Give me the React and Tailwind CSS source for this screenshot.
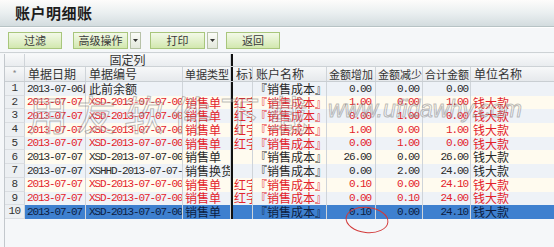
import React from "react";

const CJK = "font-['Noto_Sans_CJK_SC','Noto_Sans',sans-serif]";
const MONO = "font-['Liberation_Mono',monospace] text-[11px] tracking-[-1.1px]";

const rows = [
  { n: 1, c: "k", date: "2013-07-06以前", doc: "此前余额", docCjk: true, type: "", flag: "", inc: "0.00", dec: "0.00", tot: "0.00", unit: "" },
  { n: 2, c: "r", date: "2013-07-07", doc: "XSD-2013-07-07-0001", type: "销售单", flag: "红字", inc: "1.00", dec: "0.00", tot: "1.00", unit: "钱大款" },
  { n: 3, c: "r", date: "2013-07-07", doc: "XSD-2013-07-07-0002", type: "销售单", flag: "红字", inc: "0.00", dec: "1.00", tot: "0.00", unit: "钱大款" },
  { n: 4, c: "r", date: "2013-07-07", doc: "XSD-2013-07-07-0003", type: "销售单", flag: "红字", inc: "1.00", dec: "0.00", tot: "1.00", unit: "钱大款" },
  { n: 5, c: "r", date: "2013-07-07", doc: "XSD-2013-07-07-0004", type: "销售单", flag: "红字", inc: "0.00", dec: "1.00", tot: "0.00", unit: "钱大款" },
  { n: 6, c: "k", date: "2013-07-07", doc: "XSD-2013-07-07-0005", type: "销售单", flag: "", inc: "26.00", dec: "0.00", tot: "26.00", unit: "钱大款" },
  { n: 7, c: "k", date: "2013-07-07", doc: "XSHHD-2013-07-07-0001", type: "销售换货单", flag: "", inc: "0.00", dec: "2.00", tot: "24.00", unit: "钱大款" },
  { n: 8, c: "r", date: "2013-07-07", doc: "XSD-2013-07-07-0006", type: "销售单", flag: "红字", inc: "0.10", dec: "0.00", tot: "24.10", unit: "钱大款" },
  { n: 9, c: "r", date: "2013-07-07", doc: "XSD-2013-07-07-0007", type: "销售单", flag: "红字", inc: "0.00", dec: "0.10", tot: "24.00", unit: "钱大款" },
  { n: 10, c: "s", date: "2013-07-07", doc: "XSD-2013-07-07-0008", type: "销售单", flag: "", inc: "0.10", dec: "0.00", tot: "24.10", unit: "钱大款" },
];

const cell = "shrink-0 overflow-hidden whitespace-nowrap border-r border-[#cfd4d9] h-full flex items-center";

function Btn({ label, drop }) {
  return (
    <div className="flex h-[17px] gap-[2px]">
      <div className={`h-full flex items-center justify-center border border-[#a8c67c] bg-gradient-to-b from-[#f3f9e8] to-[#d2e8af] text-[11px] text-[#3a3a3a] ${CJK} ${drop ? "w-[55px]" : "w-[54px]"}`}>
        {label}
      </div>
      {drop && (
        <div className="h-full w-[11px] flex items-center justify-center border border-[#b7c2a8] bg-gradient-to-b from-[#fbfcf8] to-[#e3e8dc]">
          <svg width="5" height="3" viewBox="0 0 5 3"><path d="M0 0h5L2.5 3z" fill="#333" /></svg>
        </div>
      )}
    </div>
  );
}

function Row({ r }) {
  const sel = r.c === "s";
  const color = r.c === "r" ? "text-[#e3232b]" : sel ? "text-[#0d1d3f]" : "text-[#2a2a2a]";
  const bg = sel ? "bg-[#3e80cf]" : r.n % 2 === 0 ? "bg-[#fffbef]" : "bg-[#eef2f7]";
  return (
    <div className={`flex h-[13.7px] ${color}`}>
      <div className={`${cell} w-[20px] justify-center bg-[#eceff2] border-b border-b-[#dadde1] text-[#333] font-['Liberation_Mono',monospace] text-[11px] tracking-[-0.5px]`}>{r.n}</div>
      <div className={`flex h-full ${bg}`}>
        <div className={`${cell} w-[61px] pl-[2px] ${MONO}`}>{r.date.slice(0, 10)}<span className={`${CJK} text-[12px] tracking-normal`}>{r.date.slice(10)}</span></div>
        <div className={`${cell} w-[97px] pl-[3px] ${r.docCjk ? `${CJK} text-[12px]` : MONO}`}>{r.doc}</div>
        <div className={`${cell} w-[48px] pl-[2px] ${CJK} text-[12px]`}>{r.type}</div>
        <div className="shrink-0 w-[2px] h-full bg-[#111]" />
        <div className={`${cell} w-[20px] pl-[1px] ${CJK} text-[12px]`}>{r.flag}</div>
        <div className={`${cell} w-[74px] pl-[2px] ${CJK} text-[12px]`}>『销售成本』</div>
        <div className={`${cell} w-[49px] justify-end pr-[4px] ${MONO}`}>{r.inc}</div>
        <div className={`${cell} w-[47px] justify-end pr-[3px] ${MONO}`}>{r.dec}</div>
        <div className={`${cell} w-[48px] justify-end pr-[2px] ${MONO}`}>{r.tot}</div>
        <div className={`${cell} w-[83px] pl-[2px] border-r-0 ${CJK} text-[12px]`}>{r.unit}</div>
      </div>
    </div>
  );
}

export default function App() {
  const hd = `${cell} pl-[3px] ${CJK} text-[12px] text-[#333]`;
  const hs = `${cell} pl-[2px] ${CJK} text-[11px] text-[#333]`;
  return (
    <div className={`relative w-[554px] h-[247px] overflow-hidden bg-[#f5f7f9] ${CJK}`}>
      {/* title bar */}
      <div className="h-[27px] flex items-center pl-[15px] bg-gradient-to-b from-[#fdfcfb] via-[#eaeff0] to-[#d3dcdf] border-b border-[#b7c3c5]">
        <span className="text-[15px] font-bold text-[#1c1c1c] tracking-[0.5px]">账户明细账</span>
      </div>
      {/* toolbar */}
      <div className="h-[26px] flex items-center pl-[8px] border-t border-white border-b border-b-[#cdd2d5]">
        <Btn label="过滤" />
        <div className="w-[11px]" />
        <Btn label="高级操作" drop />
        <div className="w-[9px]" />
        <Btn label="打印" drop />
        <div className="w-[8px]" />
        <Btn label="返回" />
      </div>
      {/* grid */}
      <div className="mt-[1px] ml-[4px] border-l border-[#c3c8cd] h-[200px]">
        <div className="flex h-[13px] bg-gradient-to-b from-[#f8f9fa] to-[#e9ecef] border-b border-[#cdd2d6]">
          <div className={`${cell} w-[20px]`} />
          <div className={`${cell} w-[206px] justify-center text-[12px] text-[#333]`}>固定列</div>
          <div className="shrink-0 w-[2px] h-full bg-[#111]" />
          <div className="flex-1" />
        </div>
        <div className="flex h-[15px] bg-gradient-to-b from-[#f7f8f9] to-[#e6e9ec] border-b border-[#c9ced2]">
          <div className={`${cell} w-[20px] justify-center text-[9px] text-[#888]`}>*</div>
          <div className={`${hd} w-[61px]`}>单据日期</div>
          <div className={`${hd} w-[97px]`}>单据编号</div>
          <div className={`${hs} w-[48px]`}>单据类型</div>
          <div className="shrink-0 w-[2px] h-full bg-[#111]" />
          <div className={`${hd} w-[20px] pl-[1px]`}>标识</div>
          <div className={`${hd} w-[74px] pl-[1px]`}>账户名称</div>
          <div className={`${hs} w-[49px]`}>金额增加</div>
          <div className={`${hs} w-[47px]`}>金额减少</div>
          <div className={`${hs} w-[48px]`}>合计金额</div>
          <div className={`${hd} w-[83px] border-r-0`}>单位名称</div>
        </div>
        {rows.map((r) => (
          <Row key={r.n} r={r} />
        ))}
      </div>
      {/* watermark */}
      <div className="absolute left-[28px] top-[93px] text-[40px] leading-none tracking-[8px] text-[rgba(255,255,255,0.3)] [-webkit-text-stroke:1px_rgba(90,90,90,0.4)] pointer-events-none">
        用友软件下载
      </div>
      <div className="absolute left-[328px] top-[98px] text-[23px] leading-none italic font-['Liberation_Sans',sans-serif] text-[rgba(255,255,255,0.3)] [-webkit-text-stroke:1px_rgba(90,90,90,0.4)] pointer-events-none">
        www.ufidawhy.com
      </div>
      {/* annotation circle */}
      <svg className="absolute left-[344px] top-[205px] pointer-events-none" width="46" height="30" viewBox="0 0 46 30">
        <ellipse cx="23" cy="15" rx="21" ry="12.5" fill="none" stroke="#d23a3a" strokeWidth="1" transform="rotate(6 23 15)" />
      </svg>
    </div>
  );
}
